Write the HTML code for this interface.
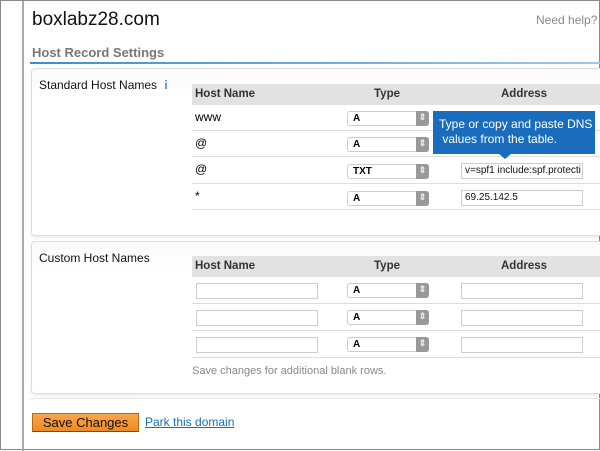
<!DOCTYPE html>
<html><head><style>
*{box-sizing:border-box;margin:0;padding:0}
body{width:600px;height:450px;overflow:hidden;background:#fff;font-family:"Liberation Sans",Arial,sans-serif;position:relative;border:1px solid #888}
.abs{position:absolute}
.vl{left:21px;top:0;width:2px;height:450px;background:#aaa}
.panel{left:30px;width:580px;border:1px solid #ddd;border-radius:4px;background:linear-gradient(#fafafa,#fff 30px);box-shadow:0 2px 3px rgba(0,0,0,.08)}
.lbl{font-size:12px;color:#111}
.th{background:#e2e2e2;height:21px;font-size:11.5px;font-weight:bold;color:#333;line-height:21px}
.row{height:26px;border-bottom:1px solid #ddd;font-size:12px}
.sel{position:absolute;width:82px;height:15px;border:1px solid #ccc;border-radius:3px;background:#fff;font-size:10px;font-weight:bold;line-height:13px;padding-left:5px}
.sel:after{content:"⇕";position:absolute;right:-1px;top:-1px;width:13px;height:15px;background:#999;color:#eee;font-size:9px;text-align:center;border-radius:0 3px 3px 0}
.inp{position:absolute;height:16px;border:1px solid #ccc;background:#fff;font-size:10px;line-height:14px;padding-left:3px;color:#111}
</style></head><body>
<div class="abs vl"></div>
<div class="abs" style="left:31px;top:8px;font-size:19px;color:#111">boxlabz28.com</div>
<div class="abs" style="left:535px;top:12px;font-size:12px;color:#888">Need help?</div>
<div class="abs" style="left:31px;top:44px;font-size:13px;font-weight:bold;color:#777">Host Record Settings</div>
<div class="abs" style="left:29px;top:61px;width:570px;height:2px;background:linear-gradient(90deg,#3a8fd0,#9cc8ea)"></div>

<div class="abs panel" style="top:67px;height:168px"></div>
<div class="abs lbl" style="left:38px;top:77px">Standard Host Names <span style="color:#4a8cc8;font-weight:bold;margin-left:4px">i</span></div>
<div class="abs th" style="left:191px;top:83px;width:408px"><span style="margin-left:3px">Host Name</span><span class="abs" style="left:182px">Type</span><span class="abs" style="left:309px">Address</span></div>
<div class="abs" style="left:191px;top:104px;width:408px">
 <div class="row" style="position:relative"><span class="abs" style="left:3px;top:5px">www</span><div class="sel" style="left:155px;top:6px">A</div></div>
 <div class="row" style="position:relative"><span class="abs" style="left:3px;top:5px">@</span><div class="sel" style="left:155px;top:6px">A</div></div>
 <div class="row" style="position:relative;height:27px"><span class="abs" style="left:3px;top:5px">@</span><div class="sel" style="left:155px;top:7px">TXT</div><div class="inp" style="left:269px;top:6px;width:122px;overflow:hidden;white-space:nowrap">v=spf1 include:spf.protecti</div></div>
 <div class="row" style="position:relative"><span class="abs" style="left:3px;top:5px">*</span><div class="sel" style="left:155px;top:7px">A</div><div class="inp" style="left:269px;top:6px;width:122px">69.25.142.5</div></div>
</div>
<div class="abs" style="left:432px;top:110px;width:162px;height:43px;background:#1a6dbd;color:#fff;font-size:12px;line-height:15px;padding:6px 0 0 6px;white-space:nowrap">Type or copy and paste DNS<br>&nbsp;values from the table.</div>
<div class="abs" style="left:498px;top:153px;width:0;height:0;border-left:6px solid transparent;border-right:6px solid transparent;border-top:5px solid #1a6dbd"></div>

<div class="abs panel" style="top:240px;height:153px"></div>
<div class="abs lbl" style="left:38px;top:250px">Custom Host Names</div>
<div class="abs th" style="left:191px;top:255px;width:408px"><span style="margin-left:3px">Host Name</span><span class="abs" style="left:182px">Type</span><span class="abs" style="left:309px">Address</span></div>
<div class="abs" style="left:191px;top:276px;width:408px">
 <div class="row" style="position:relative;height:27px"><div class="inp" style="left:4px;top:6px;width:122px"></div><div class="sel" style="left:155px;top:6px">A</div><div class="inp" style="left:269px;top:6px;width:122px"></div></div>
 <div class="row" style="position:relative;height:27px"><div class="inp" style="left:4px;top:6px;width:122px"></div><div class="sel" style="left:155px;top:6px">A</div><div class="inp" style="left:269px;top:6px;width:122px"></div></div>
 <div class="row" style="position:relative;height:27px"><div class="inp" style="left:4px;top:6px;width:122px"></div><div class="sel" style="left:155px;top:6px">A</div><div class="inp" style="left:269px;top:6px;width:122px"></div></div>
</div>
<div class="abs" style="left:191px;top:364px;font-size:11px;color:#888">Save changes for additional blank rows.</div>
<div class="abs" style="left:29px;top:397px;width:570px;height:1px;background:#e4e4e4"></div>

<div class="abs" style="left:31px;top:412px;width:107px;height:19px;background:linear-gradient(#f9a650,#ef8a20);border:1px solid #b86a10;border-bottom-color:#7a4a10;font-size:13px;color:#111;text-align:center;line-height:17px">Save Changes</div>
<div class="abs" style="left:144px;top:414px;font-size:12px;color:#1a6db8;text-decoration:underline">Park this domain</div>
</body></html>
